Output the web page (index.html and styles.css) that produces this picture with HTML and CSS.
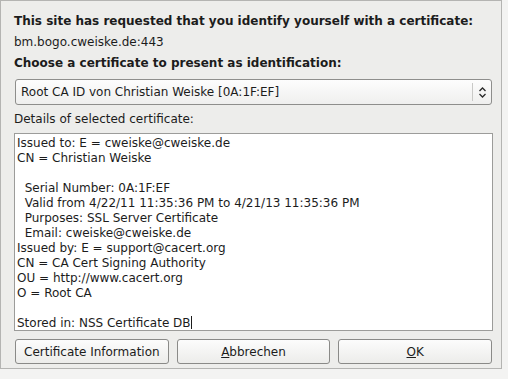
FILE: index.html
```html
<!DOCTYPE html>
<html lang="de">
<head>
  <meta charset="UTF-8" />
  <title>User Identification Request</title>
  <link rel="stylesheet" href="styles.css">
</head>
<body>

  <div class="dialog">
    <div class="heading">This site has requested that you identify yourself with a certificate:</div>
    <div class="host">bm.bogo.cweiske.de:443</div>
    <div class="heading choose">Choose a certificate to present as identification:</div>

    <div class="combo">
      <span class="combo-text">Root CA ID von Christian Weiske [0A:1F:EF]</span>
      <span class="combo-arrows">
        <svg width="9" height="13" viewBox="0 0 9 13">
          <path d="M1.5 5 L4.5 2 L7.5 5 M1.5 8 L4.5 11 L7.5 8" fill="none" stroke="#2a2a2a" stroke-width="1.3"/>
        </svg>
      </span>
    </div>

    <div class="details-label">Details of selected certificate:</div>

    <div class="details">Issued to: E = cweiske@cweiske.de
CN = Christian Weiske

  Serial Number: 0A:1F:EF
  Valid from 4/22/11 11:35:36 PM to 4/21/13 11:35:36 PM
  Purposes: SSL Server Certificate
  Email: cweiske@cweiske.de
Issued by: E = support@cacert.org
CN = CA Cert Signing Authority
OU = http://www.cacert.org
O = Root CA

Stored in: NSS Certificate DB<span class="caret"></span></div>

    <div class="buttons">
      <button>Certificate Information</button>
      <button><u>A</u>bbrechen</button>
      <button><u>O</u>K</button>
    </div>
  </div>

</body>
</html>
```

FILE: styles.css
```css
body {
  margin: 0;
  background-color: #f3f3f2;
  font-family: "DejaVu Sans", sans-serif;
  font-size: 12px;
  color: #1c1c1c;
}

.dialog {
  width: 502px;
  height: 369px;
  box-sizing: border-box;
  border: 1px solid #b4b4b2;
  background-color: #ededeb;
  padding: 13px 8px 0 13px;
  display: flex;
  flex-direction: column;
}

.heading,
.host,
.details-label {
  line-height: 15px;
}

.heading {
  font-weight: bold;
}

.host {
  margin-top: 6px;
}

.choose {
  margin-top: 6px;
}

.combo {
  margin: 8px 1px 0 1px;
  height: 26px;
  box-sizing: border-box;
  border: 1px solid #8e8e8c;
  border-radius: 3px;
  background: linear-gradient(#fdfdfd, #efefee);
  display: flex;
  align-items: center;
}

.combo-text {
  flex: 1;
  padding-left: 5px;
}

.combo-arrows {
  width: 18px;
  height: 18px;
  border-left: 1px solid #c9c9c7;
  display: flex;
  align-items: center;
  justify-content: center;
}

.details-label {
  margin-top: 7px;
}

.details {
  margin-top: 6px;
  height: 198px;
  box-sizing: border-box;
  border: 1px solid #9c9c9a;
  background-color: #ffffff;
  padding: 2px 2px;
  line-height: 15px;
  white-space: pre;
}

.caret {
  display: inline-block;
  width: 1px;
  height: 13px;
  background-color: #1c1c1c;
  vertical-align: -2px;
}

.buttons {
  margin: 8px 1px 0 1px;
  display: grid;
  grid-template-columns: 1fr 1fr 1fr;
  gap: 8px;
}

.buttons button {
  height: 25px;
  font-family: inherit;
  font-size: 12px;
  color: #1c1c1c;
  border: 1px solid #8a8a88;
  border-radius: 3px;
  background: linear-gradient(#fcfcfc, #ececea);
  padding: 0;
}
```
